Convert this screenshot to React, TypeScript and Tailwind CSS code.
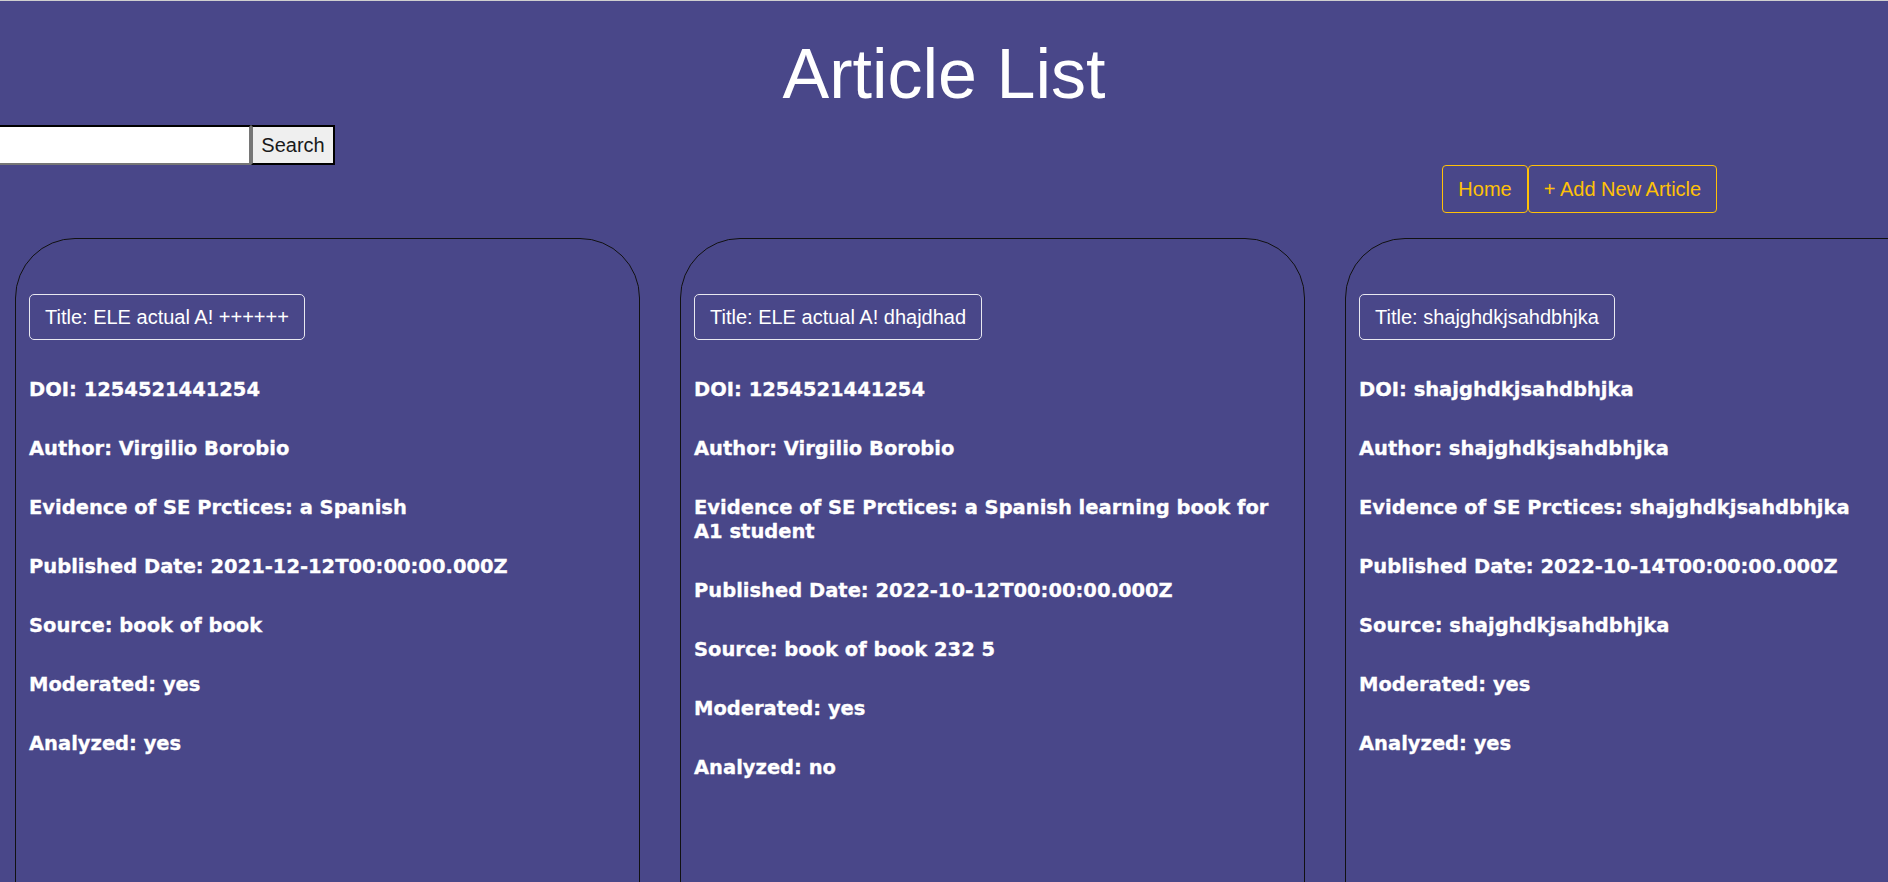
import React from 'react';

type Article = {
  title: string;
  doi: string;
  author: string;
  evidence: string;
  publishedDate: string;
  source: string;
  moderated: string;
  analyzed: string;
};

const articles: Article[] = [
  {
    title: 'ELE actual A! ++++++',
    doi: '1254521441254',
    author: 'Virgilio Borobio',
    evidence: 'a Spanish',
    publishedDate: '2021-12-12T00:00:00.000Z',
    source: 'book of book',
    moderated: 'yes',
    analyzed: 'yes',
  },
  {
    title: 'ELE actual A! dhajdhad',
    doi: '1254521441254',
    author: 'Virgilio Borobio',
    evidence: 'a Spanish learning book for A1 student',
    publishedDate: '2022-10-12T00:00:00.000Z',
    source: 'book of book 232 5',
    moderated: 'yes',
    analyzed: 'no',
  },
  {
    title: 'shajghdkjsahdbhjka',
    doi: 'shajghdkjsahdbhjka',
    author: 'shajghdkjsahdbhjka',
    evidence: 'shajghdkjsahdbhjka',
    publishedDate: '2022-10-14T00:00:00.000Z',
    source: 'shajghdkjsahdbhjka',
    moderated: 'yes',
    analyzed: 'yes',
  },
];

function ArticleCard({ article }: { article: Article }) {
  const rows: [string, string][] = [
    ['DOI', article.doi],
    ['Author', article.author],
    ['Evidence of SE Prctices', article.evidence],
    ['Published Date', article.publishedDate],
    ['Source', article.source],
    ['Moderated', article.moderated],
    ['Analyzed', article.analyzed],
  ];

  return (
    <div className="w-[625px] h-[720px] shrink-0 border border-[#111] rounded-[60px] pt-[55px] px-[13px]">
      <div className="inline-block border border-[#e8e8f0] rounded-[5px] px-[15px] py-[10px] text-[20px] leading-[24px] text-white">
        Title: {article.title}
      </div>
      <div className="mt-[38px] flex flex-col gap-[35px] font-['DejaVu_Sans',sans-serif] font-bold text-[19.5px] leading-[24px] text-white [-webkit-text-stroke:0.3px_white]">
        {rows.map(([label, value]) => (
          <p key={label}>
            {label}: {value}
          </p>
        ))}
      </div>
    </div>
  );
}

export default function App() {
  return (
    <div className="w-screen h-screen overflow-hidden bg-[#494789] border-t border-[#cfcfcf] font-['Liberation_Sans',Arial,sans-serif]">
      <h1 className="mt-[33px] text-center text-[70px] leading-[80px] text-white">Article List</h1>

      {/* Search */}
      <form className="mt-[11px] flex -ml-[70px]" onSubmit={(e) => e.preventDefault()}>
        <input
          type="text"
          className="w-[321px] h-[40px] bg-white border-2 border-t-black border-l-black border-b-[#767676] border-r-[#767676] outline-none"
        />
        <button
          type="submit"
          className="h-[40px] w-[84px] bg-[#efefef] border-2 border-l-[#767676] border-t-black border-r-black border-b-black text-[20px] text-[#1a1a1a]"
        >
          Search
        </button>
      </form>

      {/* Nav */}
      <div className="flex justify-end pr-[171px]">
        <a className="w-[86px] h-[48px] flex items-center justify-center border border-[#ffc107] rounded-[4px] text-[20px] text-[#ffc107]">
          Home
        </a>
        <a className="w-[189px] h-[48px] flex items-center justify-center border border-[#ffc107] rounded-[4px] text-[20px] text-[#ffc107]">
          + Add New Article
        </a>
      </div>

      {/* Cards */}
      <div className="mt-[25px] pl-[15px] flex gap-[40px]">
        {articles.map((a) => (
          <ArticleCard key={a.title} article={a} />
        ))}
      </div>
    </div>
  );
}
